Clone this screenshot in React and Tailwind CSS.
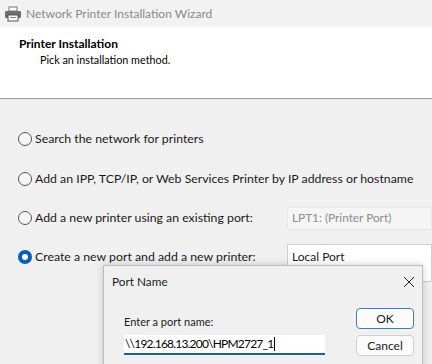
const font = { fontFamily: 'Lato, "Noto Sans", sans-serif' };

const Radio = ({ checked }) =>
  checked ? (
    <span className="w-[14px] h-[14px] rounded-full bg-[#005fb8] flex items-center justify-center shrink-0">
      <span className="w-[6px] h-[6px] rounded-full bg-white"></span>
    </span>
  ) : (
    <span className="w-[14px] h-[14px] rounded-full border border-[#555] bg-[#f6f6f6] shrink-0"></span>
  );

const Option = ({ checked, label, children, className }) => (
  <div className={"flex items-center h-[24px] " + (className || "")}>
    <div className="flex items-center gap-[3px] w-[286px] pl-[18px]">
      <Radio checked={checked} />
      <span className="text-[12.3px] text-[#1a1a1a] whitespace-nowrap">{label}</span>
    </div>
    {children}
  </div>
);

export default function App() {
  return (
    <div className="relative w-[432px] h-[364px] overflow-hidden bg-[#f0f0f0]" style={font}>
      {/* Title bar */}
      <div className="h-[27px] bg-[#f2f2f2] flex items-center pl-[4px] gap-[4px]">
        <svg width="18" height="16" viewBox="0 0 18 16">
          <rect x="5" y="1" width="8" height="4" fill="#fff" stroke="#777" strokeWidth="1" />
          <rect x="1" y="5" width="16" height="7" rx="1" fill="#6f6f6f" />
          <rect x="4" y="9" width="10" height="6" fill="#fff" stroke="#555" strokeWidth="1" />
          <rect x="6" y="11" width="6" height="1" fill="#888" />
        </svg>
        <span className="text-[12px] text-[#8a8a8a]">Network Printer Installation Wizard</span>
      </div>

      {/* Header */}
      <div className="h-[71px] bg-white pt-[9px]">
        <div className="pl-[19px] text-[12px] font-bold text-black leading-[16px]">Printer Installation</div>
        <div className="pl-[40px] text-[10.8px] text-black leading-[16px]">Pick an installation method.</div>
      </div>
      <div className="h-[1px] bg-[#a0a0a0]"></div>
      <div className="h-[1px] bg-[#e6e6e6]"></div>

      {/* Body */}
      <div className="pt-[27px] flex flex-col">
        <Option label="Search the network for printers" />
        <Option className="mt-[16px]" label="Add an IPP, TCP/IP, or Web Services Printer by IP address or hostname" />
        <Option className="mt-[15px]" label="Add a new printer using an existing port:">
          <div className="ml-[1px] h-[23px] flex-1 bg-[#f5f5f5] border border-[#e8e8e8] flex items-center pl-[4px] text-[11.8px] text-[#8c8c8c]">
            LPT1: (Printer Port)
          </div>
        </Option>
        <Option className="mt-[15px]" checked label="Create a new port and add a new printer:">
          <div className="ml-[1px] h-[24px] flex-1 bg-white border border-[#cfcfcf] flex items-center pl-[4px] text-[12px] text-[#1a1a1a] mt-[12px] pb-[12px] box-content">
            Local Port
          </div>
        </Option>
      </div>

      {/* Port Name dialog */}
      <div className="absolute left-[103px] top-[265px] w-[320px] h-[110px] bg-[#f0f0f0] border border-[#bdbdbd] shadow-[0_0_8px_rgba(0,0,0,0.18)]">
        <div className="flex items-center justify-between h-[32px] pl-[8px] pr-[6px]">
          <span className="text-[11.8px] text-[#1a1a1a]">Port Name</span>
          <svg width="12" height="12" viewBox="0 0 12 12" className="mr-[1px]">
            <path d="M1 1L11 11M11 1L1 11" stroke="#222" strokeWidth="1" />
          </svg>
        </div>
        <div className="flex mt-[10px]">
          <div className="pl-[20px] w-[252px]">
            <div className="text-[11px] text-[#1a1a1a] mt-[5px] leading-[17px]">Enter a port name:</div>
            <div className="mt-[5px] h-[20px] w-[201px] bg-white border-b-2 border-[#1f5f8b] flex items-center pl-[1px] text-[12px] tracking-[-0.8px] text-black">
              \\192.168.13.200\HPM2727_1<span className="w-[1px] h-[14px] bg-black ml-[1px]"></span>
            </div>
          </div>
          <div className="flex flex-col gap-[6px]">
            <div className="w-[58px] h-[21px] border border-[#3a7fb8] rounded-[4px] bg-[#fbfbfb] flex items-center justify-center text-[12px] text-[#1a1a1a]">OK</div>
            <div className="w-[58px] h-[21px] border border-[#d0d0d0] rounded-[4px] bg-[#fbfbfb] flex items-center justify-center text-[12px] text-[#1a1a1a]">Cancel</div>
          </div>
        </div>
      </div>
    </div>
  );
}
